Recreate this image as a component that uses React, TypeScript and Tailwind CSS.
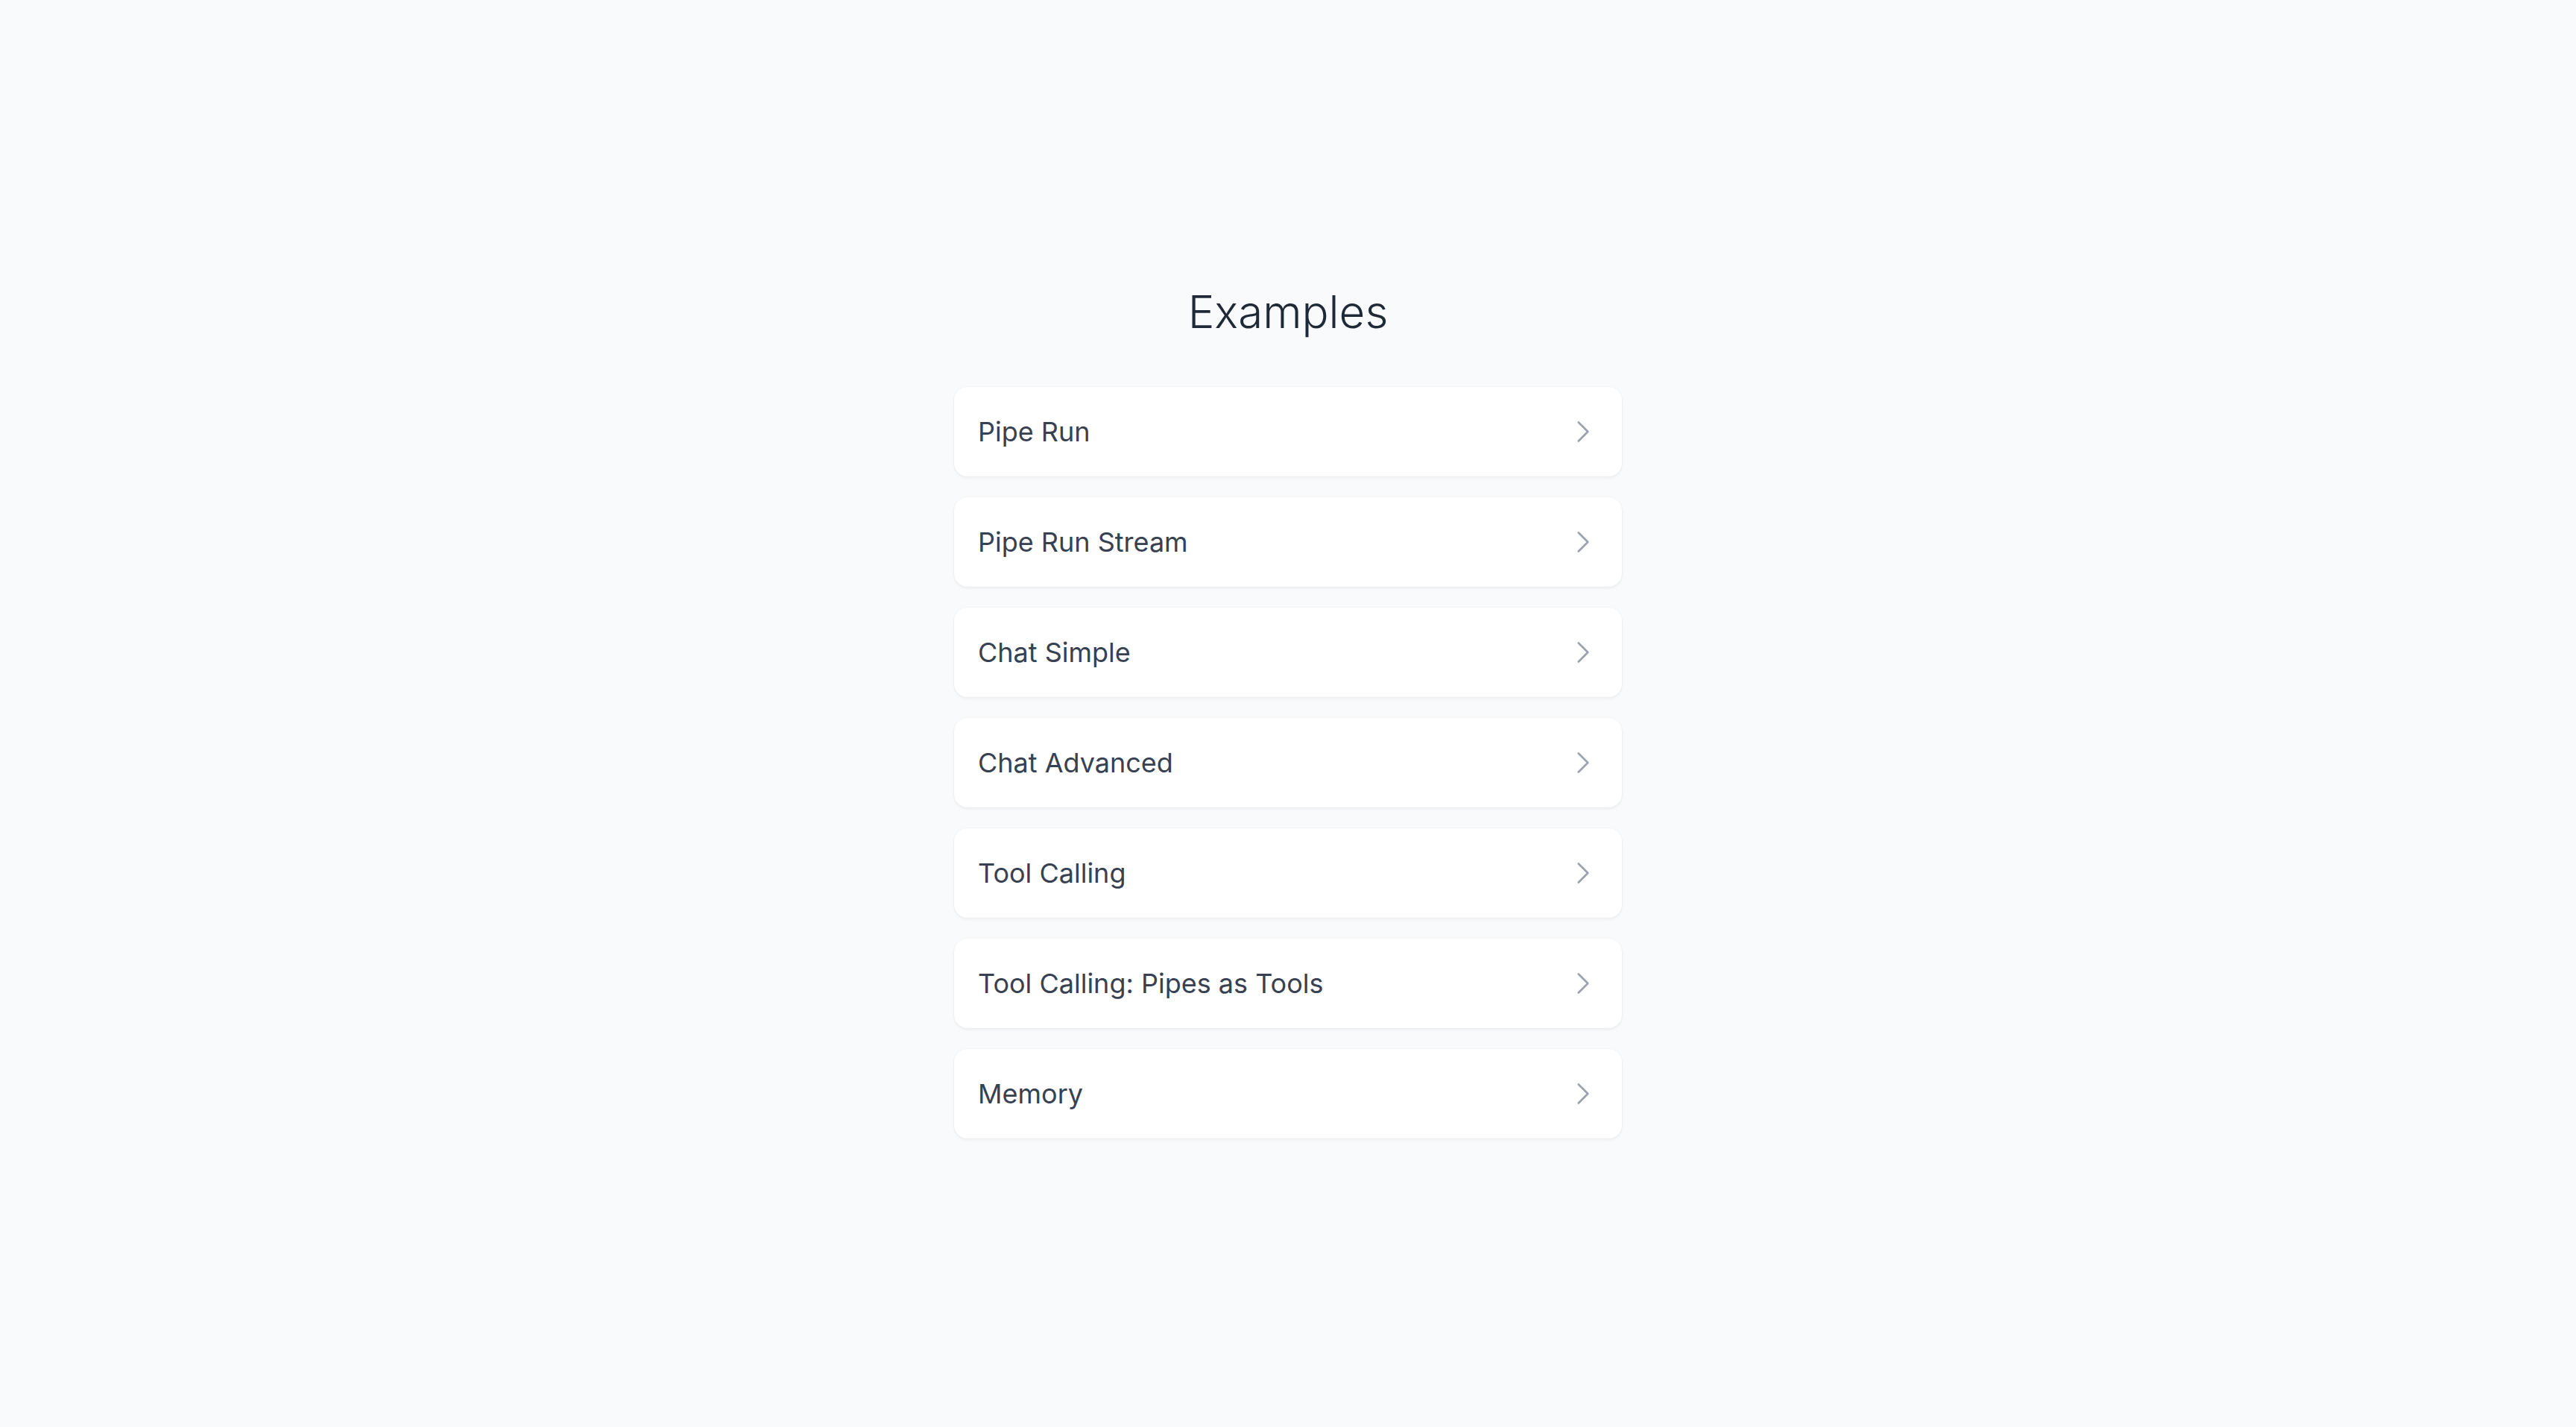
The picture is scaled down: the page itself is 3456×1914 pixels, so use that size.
import React from "react";

const items = [
  "Pipe Run",
  "Pipe Run Stream",
  "Chat Simple",
  "Chat Advanced",
  "Tool Calling",
  "Tool Calling: Pipes as Tools",
  "Memory",
];

function Chevron() {
  return (
    <svg
      viewBox="0 0 24 24"
      fill="none"
      stroke="currentColor"
      strokeWidth={1.6}
      className="w-[40px] h-[40px] text-[#9ca3af] shrink-0"
    >
      <path strokeLinecap="round" strokeLinejoin="round" d="M8.25 4.5l7.5 7.5-7.5 7.5" />
    </svg>
  );
}

export default function App() {
  return (
    <div
      className="min-h-screen w-full bg-[#f9fafb] flex items-center justify-center pb-[5px]"
      style={{ fontFamily: "Inter, 'Noto Sans', sans-serif" }}
    >
      <div className="w-[896px] flex flex-col">
        <h1 className="text-center text-[60px] leading-[72px] font-light text-[#1f2937] mb-[65px]">
          Examples
        </h1>
        <div className="flex flex-col gap-[28px]">
          {items.map((label) => (
            <a
              key={label}
              href="#"
              className="flex items-center justify-between bg-white rounded-[18px] px-[32px] py-[32px] shadow-[0_2px_4px_0_rgba(0,0,0,0.05),0_0_0_1px_rgba(0,0,0,0.02)]"
            >
              <span className="text-[36px] leading-[56px] text-[#374151]">{label}</span>
              <Chevron />
            </a>
          ))}
        </div>
      </div>
    </div>
  );
}
